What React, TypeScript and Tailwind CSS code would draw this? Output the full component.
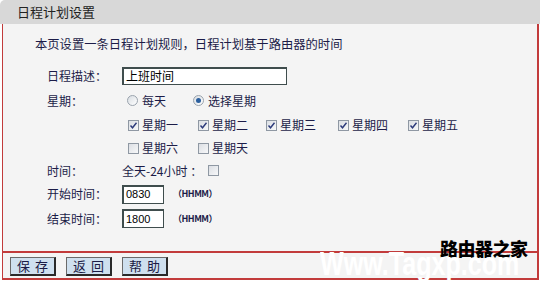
import React from "react";

const font = { fontFamily: '"Noto Sans CJK SC", "Noto Sans", sans-serif' };

function Radio({ checked }: { checked?: boolean }) {
  return (
    <span className="inline-flex items-center justify-center w-[11px] h-[11px] rounded-full border border-[#9aa3ad] bg-gradient-to-br from-[#d8dde2] to-[#ffffff]">
      {checked && <span className="w-[5px] h-[5px] rounded-full bg-[#2b5f9e]" />}
    </span>
  );
}

function Check({ checked }: { checked?: boolean }) {
  return (
    <span className="inline-flex items-center justify-center w-[11px] h-[11px] border border-[#8f98a3] bg-gradient-to-br from-[#dcdfe4] to-[#f7f8f9]">
      {checked && (
        <svg width="9" height="9" viewBox="0 0 9 9">
          <path d="M1.5 4.5 L3.5 6.8 L7.5 1.8" fill="none" stroke="#2c3a7a" strokeWidth="1.4" />
        </svg>
      )}
    </span>
  );
}

function Row({ h, label, children }: { h: string; label?: string; children?: React.ReactNode }) {
  return (
    <div className={`flex items-center ${h}`}>
      <div className="w-[75px] shrink-0">{label}</div>
      <div className="flex items-center">{children}</div>
    </div>
  );
}

function Day({ label, w }: { label: string; w: string }) {
  return (
    <div className={`flex items-center gap-[3px] ${w}`}>
      <Check checked={label !== "星期六" && label !== "星期天"} />
      <span>{label}</span>
    </div>
  );
}

function Btn({ children }: { children: React.ReactNode }) {
  return (
    <div className="h-[19px] w-[46px] flex items-center justify-center bg-[#cfe0ef] border border-[#6a6a6a] border-r-[#2a2a2a] border-b-[#2a2a2a] border-r-2 border-b-2 text-[13px] tracking-[5px] pl-[5px] text-[#1b1b45]">
      {children}
    </div>
  );
}

export default function App() {
  return (
    <div className="w-[540px] h-[281px] bg-white text-[12px] text-[#1c1c48] relative overflow-hidden" style={font}>
      <div className="h-[24px] bg-[#d8d8d8] rounded-tl-[5px] flex items-center pl-[17px] text-[13px] text-[#222]">
        日程计划设置
      </div>
      <div className="ml-[2px] mr-[1px] h-[256px] bg-[#f4f4f4] border-l border-r-2 border-b-2 border-[#c23b3b] flex flex-col">
        <div className="h-[39px] flex items-center pl-[32px] pt-[1px] text-[12.3px]">
          本页设置一条日程计划规则，日程计划基于路由器的时间
        </div>
        <div className="pl-[44px] flex flex-col">
          <Row h="h-[25px]" label="日程描述：">
            <div className="w-[165px] h-[18px] border border-[#3f4d4d] border-l-2 border-t-2 bg-white flex items-center pl-[2px] text-[12px] text-black">
              上班时间
            </div>
          </Row>
          <Row h="h-[25px]" label="星期：">
            <div className="flex items-center pl-[5px]">
              <div className="flex items-center gap-[4px] w-[66px]">
                <Radio />
                <span>每天</span>
              </div>
              <div className="flex items-center gap-[4px]">
                <Radio checked />
                <span>选择星期</span>
              </div>
            </div>
          </Row>
          <Row h="h-[24px]">
            <div className="flex items-center pl-[6px]">
              <Day label="星期一" w="w-[70px]" />
              <Day label="星期二" w="w-[68px]" />
              <Day label="星期三" w="w-[72px]" />
              <Day label="星期四" w="w-[70px]" />
              <Day label="星期五" w="w-[70px]" />
            </div>
          </Row>
          <Row h="h-[22px]">
            <div className="flex items-center pl-[6px]">
              <Day label="星期六" w="w-[70px]" />
              <Day label="星期天" w="w-[68px]" />
            </div>
          </Row>
          <Row h="h-[23px]" label="时间：">
            <span className="mr-[6px]">全天-24小时 ：</span>
            <Check />
          </Row>
          <Row h="h-[24px]" label="开始时间：">
            <div className="w-[42px] h-[19px] border border-[#3f4d4d] border-l-2 border-t-2 bg-white flex items-center pl-[2px] text-[11px] text-black" style={{ fontFamily: '"Liberation Sans", sans-serif' }}>
              0830
            </div>
            <span className="ml-[9px] text-[9px] font-bold tracking-[-0.5px]">（HHMM）</span>
          </Row>
          <Row h="h-[25px]" label="结束时间：">
            <div className="w-[42px] h-[19px] border border-[#3f4d4d] border-l-2 border-t-2 bg-white flex items-center pl-[2px] text-[11px] text-black" style={{ fontFamily: '"Liberation Sans", sans-serif' }}>
              1800
            </div>
            <span className="ml-[9px] text-[9px] font-bold tracking-[-0.5px]">（HHMM）</span>
          </Row>
        </div>
        <div className="mt-auto h-[27px] border-t-2 border-[#c23b3b] flex items-center gap-[10px] pl-[7px] pt-[1px]">
          <Btn>保存</Btn>
          <Btn>返回</Btn>
          <Btn>帮助</Btn>
        </div>
      </div>
      <div className="absolute left-[440px] top-[236px] text-[18px] leading-[24px] font-black text-black tracking-[-0.5px]" style={font}>
        路由器之家
      </div>
      <div
        className="absolute left-[320px] top-[247px] text-[33px] font-bold text-white leading-none origin-left scale-x-[0.76]"
        style={{ fontFamily: '"Liberation Sans", sans-serif' }}
      >
        Www.Tagxp.com
      </div>
    </div>
  );
}
